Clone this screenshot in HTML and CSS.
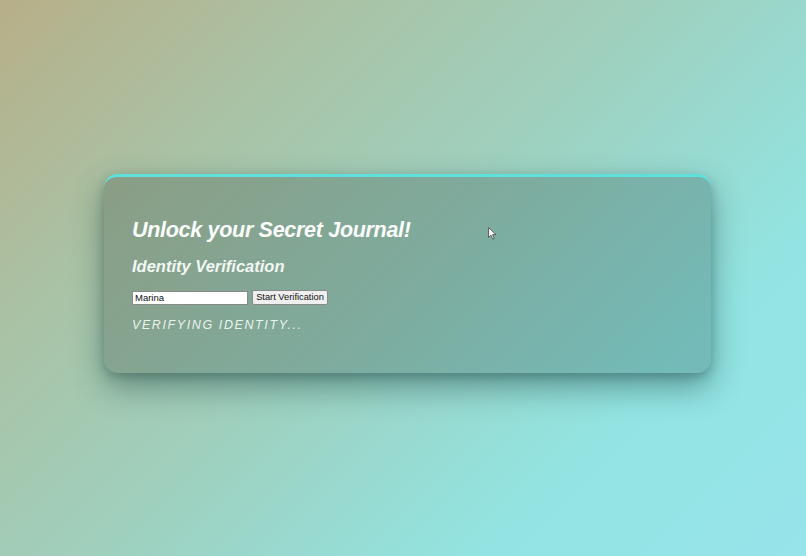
FILE: index.html
```html
<!DOCTYPE html>
<html lang="en">
<head>
<meta charset="utf-8">
<title>Secret Journal</title>
<link rel="stylesheet" href="styles.css">
</head>
<body>
<main class="page">
  <section class="card">
    <h1 class="title">Unlock your Secret Journal!</h1>
    <h2 class="subtitle">Identity Verification</h2>
    <div class="form-row">
      <input class="name-input" type="text" value="Marina">
      <button class="start-btn" type="button">Start Verification</button>
    </div>
    <p class="status">VERIFYING IDENTITY...</p>
  </section>
  <svg class="cursor" width="9" height="13" viewBox="0 0 9 13" aria-hidden="true">
    <path d="M0.5 0.5 L0.5 10.5 L3 8.2 L4.8 12.2 L6.3 11.5 L4.6 7.6 L8 7.6 Z" fill="#f4f4f4" stroke="#555" stroke-width="0.9" stroke-linejoin="round"/>
  </svg>
</main>
</body>
</html>
```
FILE: styles.css
```css
html, body {
  margin: 0;
  padding: 0;
  height: 100%;
}
body {
  background: linear-gradient(135deg, #b7af88 0%, #a9c3a6 26%, #9ed1c0 50%, #92e4e2 76%, #97e4ea 100%);
  font-family: "Liberation Sans", Arial, sans-serif;
  overflow: hidden;
}
.page {
  position: relative;
  width: 806px;
  height: 556px;
  box-sizing: border-box;
  padding: 174px 0 0 104px;
}
.card {
  width: 607px;
  height: 199px;
  box-sizing: border-box;
  padding: 41px 28px 0 28px;
  border-radius: 14px;
  border-top: 3px solid #5fe0dc;
  background: linear-gradient(135deg, rgba(70, 85, 75, 0.32) 0%, rgba(30, 75, 72, 0.27) 100%);
  box-shadow: 0 14px 32px rgba(20, 60, 60, 0.45), 0 4px 10px rgba(20, 60, 60, 0.25);
}
.title {
  margin: 0;
  font-size: 21.5px;
  line-height: 25px;
  font-weight: bold;
  font-style: italic;
  color: #fbfdfb;
  letter-spacing: -0.3px;
}
.subtitle {
  margin: 14px 0 0 0;
  font-size: 16.5px;
  line-height: 19px;
  font-weight: bold;
  font-style: italic;
  color: #f2f7f3;
}
.form-row {
  display: flex;
  align-items: center;
  gap: 4px;
  margin-top: 14px;
}
.name-input {
  box-sizing: border-box;
  width: 116px;
  height: 14px;
  margin: 0;
  padding: 0 2px;
  border: 1px solid #8a8a8a;
  background: #ffffff;
  font-family: "Liberation Sans", Arial, sans-serif;
  font-size: 9.5px;
  color: #111;
}
.start-btn {
  box-sizing: border-box;
  width: 76px;
  height: 15px;
  margin: 0;
  padding: 0 3px;
  border: 1px solid #8a8a8a;
  border-radius: 2px;
  background: #efefef;
  font-family: "Liberation Sans", Arial, sans-serif;
  font-size: 9.3px;
  line-height: 13px;
  color: #111;
  white-space: nowrap;
}
.status {
  margin: 13px 0 0 0;
  font-size: 12.5px;
  line-height: 14px;
  font-style: italic;
  letter-spacing: 1.6px;
  color: rgba(245, 253, 249, 0.92);
}
.cursor {
  position: absolute;
  left: 488px;
  top: 227px;
}
```
